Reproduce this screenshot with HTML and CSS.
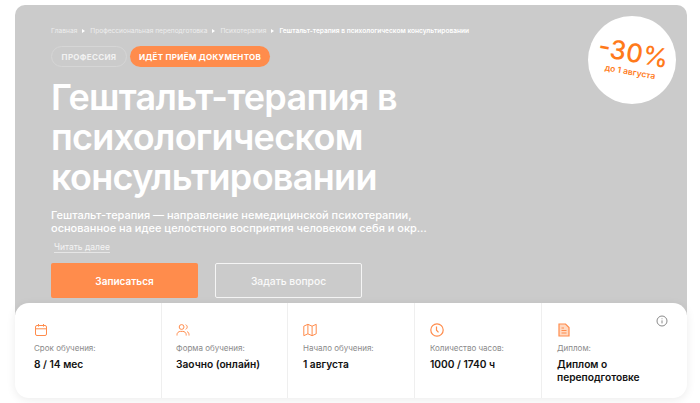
FILE: index.html
```html
<!DOCTYPE html>
<html lang="ru">
<head>
<meta charset="utf-8">
<title>Гештальт-терапия</title>
<link rel="stylesheet" href="styles.css">
</head>
<body>
<main class="page">
  <section class="hero">
    <nav class="crumbs">
      <span>Главная</span><i class="sep"></i><span>Профессиональная переподготовка</span><i class="sep"></i><span>Психотерапия</span><i class="sep"></i><b>Гештальт-терапия в психологическом консультировании</b>
    </nav>
    <div class="tags">
      <span class="tag tag-outline">ПРОФЕССИЯ</span>
      <span class="tag tag-fill">ИДЁТ ПРИЁМ ДОКУМЕНТОВ</span>
    </div>
    <h1 class="title">Гештальт-терапия в психологическом консультировании</h1>
    <p class="lead">Гештальт-терапия — направление немедицинской психотерапии, основанное на идее целостного восприятия человеком себя и окр…</p>
    <a class="more">Читать далее</a>
    <div class="actions">
      <a class="btn btn-primary">Записаться</a>
      <a class="btn btn-ghost">Задать вопрос</a>
    </div>
    <div class="badge">
      <div class="badge-in">
        <div class="badge-big">-30%</div>
        <div class="badge-small">до 1 августа</div>
      </div>
    </div>
  </section>
  <section class="facts">
    <div class="fact fact-1">
      <svg class="ico" viewBox="0 0 14 14"><rect x="1.500" y="2.500" width="11" height="10" rx="1.500"/><path d="M1.500 5.800h11M4.500 1v2.600M9.500 1v2.600"/></svg>
      <div class="label">Срок обучения:</div>
      <div class="value">8 / 14 мес</div>
    </div>
    <div class="fact fact-2">
      <svg class="ico" viewBox="0 0 14 14"><circle cx="5.600" cy="4" r="2.400"/><path d="M1 12.500v-.8c0-2 1.600-3.300 3.500-3.300h2.200c1.900 0 3.500 1.300 3.500 3.300v.8M9.600 1.700c1 .4 1.600 1.300 1.600 2.300s-.6 1.900-1.600 2.300M11 8.600c1.200.4 2 1.600 2 3v.9"/></svg>
      <div class="label">Форма обучения:</div>
      <div class="value">Заочно (онлайн)</div>
    </div>
    <div class="fact">
      <svg class="ico" viewBox="0 0 14 14"><path d="M.8 3.200 4.900 1.300l4.200 1.900 4.100-1.900v9.500l-4.100 1.900-4.200-1.900-4.100 1.900zM4.900 1.300v9.500M9.100 3.200v9.500"/></svg>
      <div class="label">Начало обучения:</div>
      <div class="value">1 августа</div>
    </div>
    <div class="fact">
      <svg class="ico ico-bold" viewBox="0 0 14 14"><circle cx="7" cy="7" r="6.200"/><path d="M6.500 3.400v3.800l2 2.200"/></svg>
      <div class="label">Количество часов:</div>
      <div class="value">1000 / 1740 ч</div>
    </div>
    <div class="fact">
      <svg class="ico ico-doc" viewBox="0 0 14 14"><path class="doc-body" d="M2 1h6.500L12 4.500V13H2z"/><path d="M4.500 5h2.500M4.500 7.500h5M4.500 10h5"/></svg>
      <div class="label">Диплом:</div>
      <div class="value">Диплом о переподготовке</div>
      <svg class="info" viewBox="0 0 12 12"><circle cx="6" cy="6" r="5"/><path d="M6 5.400v3M6 3.400v.8"/></svg>
    </div>
  </section>
</main>
</body>
</html>
```
FILE: styles.css
```css
* { box-sizing: border-box; }
html, body { margin: 0; padding: 0; background: #fff; }
body { font-family: "Inter", "Noto Sans", sans-serif; color: #111; overflow: hidden; }
.page { width: 700px; height: 403px; padding: 5px 13px 0 15px; }
.hero {
  position: relative;
  height: 310px;
  background: #cbcbcb;
  border-radius: 10px 10px 0 0;
  padding: 21px 36px 0;
  color: #fff;
}
.crumbs { display: flex; align-items: center; font-size: 6.600px; line-height: 10px; white-space: nowrap; color: #eee; }
.crumbs b { font-weight: 600; color: #fff; }
.sep { width: 0; height: 0; margin: 0 5px; border-left: 3px solid #fff; border-top: 2px solid transparent; border-bottom: 2px solid transparent; }
.tags { display: flex; gap: 3px; margin-top: 10px; }
.tag { height: 21px; border-radius: 11px; display: flex; align-items: center; justify-content: center; font-size: 8px; font-weight: 700; letter-spacing: .3px; }
.tag-outline { width: 76px; border: 1px solid #d6d6d6; color: #f2f2f2; }
.tag-fill { width: 140px; background: #ff8c4c; color: #fff; }
.title { margin: 10px 0 0; width: 380px; font-size: 36px; line-height: 40px; font-weight: 600; letter-spacing: -.7px; color: #fff; }
.lead { margin: 12px 0 0; width: 385px; font-size: 11px; line-height: 13px; font-weight: 500; color: #fff; }
.more { display: block; width: fit-content; margin: 7px 0 0 3px; font-size: 8.500px; line-height: 10px; color: #f4f4f4; border-bottom: 1px solid #e6e6e6; }
.actions { display: flex; gap: 17px; margin-top: 10px; }
.btn { width: 147px; height: 35px; border-radius: 2px; display: flex; align-items: center; justify-content: center; font-size: 10.300px; font-weight: 500; }
.btn-primary { background: #ff8c4c; color: #fff; font-size: 10px; font-weight: 600; }
.btn-ghost { border: 1.500px solid #f5f5f5; color: #fafafa; }
.badge { position: absolute; top: 11px; right: 11px; width: 88px; height: 88px; border-radius: 50%; background: #fff; display: flex; align-items: center; justify-content: center; }
.badge-in { transform: rotate(10deg); text-align: center; color: #ff7a1a; margin-top: -2px; }
.badge-big { font-size: 26px; line-height: 26px; font-weight: 500; }
.badge-small { font-size: 8.500px; line-height: 12px; font-weight: 600; }
.facts {
  position: relative;
  display: grid;
  grid-template-columns: 146px 126px 127px 127px 146px;
  height: 95px;
  margin-top: -12px;
  background: #fff;
  border-radius: 14px;
  box-shadow: 0 2px 10px rgba(0,0,0,.08);
}
.fact { position: relative; padding: 20px 0 0 15px; border-left: 1px solid #efefef; }
.fact-1 { border-left: 0; padding-left: 19px; }
.fact-2 { padding-left: 14px; }
.ico { display: block; width: 14px; height: 14px; fill: none; stroke: #ff8c4c; stroke-width: 1; }
.ico-bold { stroke-width: 1.200; }
.ico-doc { stroke-width: 1.200; }
.doc-body { fill: #ffd9c2; }
.label { margin-top: 6px; font-size: 8px; line-height: 10px; color: #8a8a8a; }
.value { margin-top: 5px; width: 110px; font-size: 10.200px; line-height: 13px; font-weight: 600; color: #111; }
.info { position: absolute; top: 12px; right: 19px; width: 12px; height: 12px; fill: none; stroke: #8a8a8a; stroke-width: 1; }
```
